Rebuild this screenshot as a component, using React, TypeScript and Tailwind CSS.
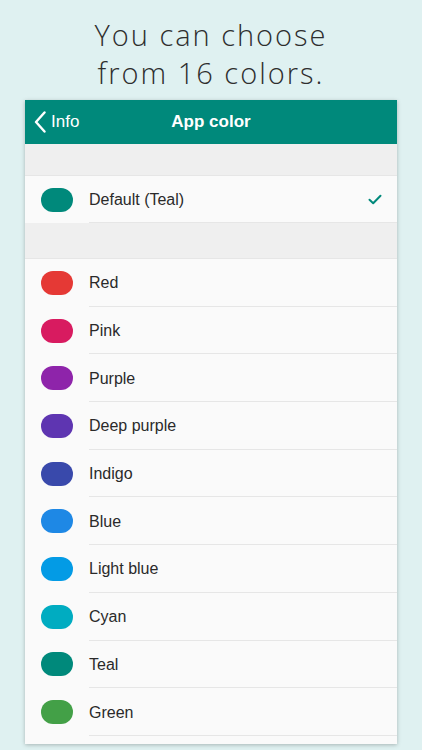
import React from 'react';

type Swatch = { name: string; color: string };

const colors: Swatch[] = [
  { name: 'Red', color: '#e53935' },
  { name: 'Pink', color: '#d81b60' },
  { name: 'Purple', color: '#8e24aa' },
  { name: 'Deep purple', color: '#5e35b1' },
  { name: 'Indigo', color: '#3949ab' },
  { name: 'Blue', color: '#1e88e5' },
  { name: 'Light blue', color: '#039be5' },
  { name: 'Cyan', color: '#00acc1' },
  { name: 'Teal', color: '#00897b' },
  { name: 'Green', color: '#43a047' },
];

const ColorRow: React.FC<{ item: Swatch; checked?: boolean; height: string }> = ({ item, checked, height }) => (
  <div className={`flex items-center pl-[16px] ${height}`}>
    <div className="w-[32px] h-[24px] rounded-full shrink-0" style={{ backgroundColor: item.color }} />
    <div className="flex-1 h-full ml-[16px] flex items-center border-b border-[#e6e6e6] pr-[15px]">
      <span className="flex-1 text-[16px] text-[#2a2a2a] pt-[2px]">{item.name}</span>
      {checked && (
        <svg width="14" height="11" viewBox="0 0 14 11" fill="none">
          <path d="M1.5 5.8 L5.2 9.2 L12.5 1.8" stroke="#00897b" strokeWidth="2" strokeLinecap="round" strokeLinejoin="round" />
        </svg>
      )}
    </div>
  </div>
);

export default function App() {
  return (
    <div className="w-[422px] h-[750px] bg-[#dff1f1] overflow-hidden flex flex-col items-center" style={{ fontFamily: '"Liberation Sans", Roboto, sans-serif' }}>
      <div
        className="pt-[16px] h-[100px] text-center text-[29px] leading-[38px] tracking-[2px] text-[#2e2e2e] font-light"
        style={{ fontFamily: '"Open Sans", "DejaVu Sans", sans-serif' }}
      >
        <div>You can choose</div>
        <div>from 16 colors.</div>
      </div>

      <div className="w-[372px] h-[644px] bg-[#fafafa] overflow-hidden shadow-[0_1px_4px_rgba(0,0,0,0.25)] flex flex-col">
        <div className="h-[44px] bg-[#00897b] flex items-center relative shrink-0">
          <div className="flex items-center pl-[9px] text-white text-[17px]">
            <svg width="13" height="22" viewBox="0 0 13 22" fill="none">
              <path d="M10.5 1.5 L2 11 L10.5 20.5" stroke="#fff" strokeWidth="2.4" strokeLinecap="round" strokeLinejoin="round" />
            </svg>
            <span className="ml-[4px]">Info</span>
          </div>
          <div className="absolute inset-0 flex items-center justify-center text-white text-[17px] font-bold pointer-events-none">
            App color
          </div>
        </div>

        <div className="h-[32px] bg-[#efefef] shrink-0 border-b border-[#e6e6e6]" />
        <div className="shrink-0">
          <ColorRow item={{ name: 'Default (Teal)', color: '#00897b' }} checked height="h-[47px]" />
        </div>
        <div className="h-[36px] bg-[#efefef] shrink-0 border-b border-[#e6e6e6]" />

        {colors.map((c) => (
          <div key={c.name} className="shrink-0">
            <ColorRow item={c} height="h-[47.7px]" />
          </div>
        ))}
      </div>
    </div>
  );
}
